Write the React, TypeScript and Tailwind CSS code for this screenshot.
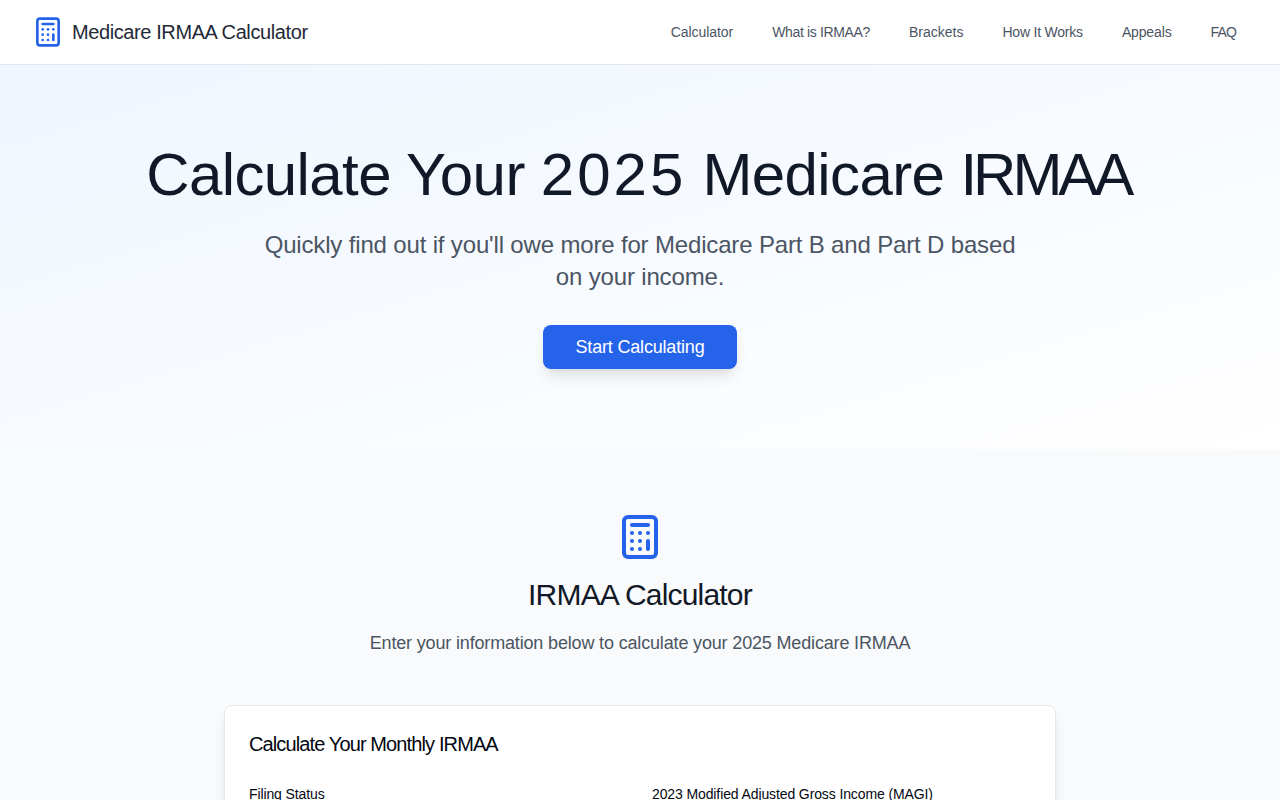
import { Calculator } from "lucide-react";

const links = [
  { label: "Calculator", cls: "tracking-[-0.005em]" },
  { label: "What is IRMAA?", cls: "tracking-[-0.025em]" },
  { label: "Brackets", cls: "tracking-[0em]" },
  { label: "How It Works", cls: "tracking-[-0.015em]" },
  { label: "Appeals", cls: "tracking-[-0.01em]" },
  { label: "FAQ", cls: "tracking-[-0.06em]" },
];

export default function App() {
  return (
    <div className="min-h-screen bg-[#f9fafb] font-['Liberation_Sans',Arial,sans-serif] text-[#111827]">
      <header className="flex h-[65px] items-center justify-between border-b border-[#e5e7eb] bg-white px-8 shadow-sm">
        <div className="flex items-center gap-2">
          <Calculator className="h-8 w-8 text-[#2563eb]" />
          <span className="text-xl tracking-[-0.02em] text-[#1f2937]">Medicare IRMAA Calculator</span>
        </div>
        <nav className="flex items-center gap-[15px]">
          {links.map((l) => (
            <a key={l.label} className={`px-3 text-sm text-[#4b5563] ${l.cls}`}>
              {l.label}
            </a>
          ))}
        </nav>
      </header>

      <section className="bg-gradient-to-br from-[#eff6ff] to-white py-20 text-center">
        <h1 className="mb-6 text-6xl leading-none tracking-[-0.01em] text-[#111827]">
          Calculate Your <span className="tracking-[0.05em]">2025</span> Medicare <span className="tracking-[-0.067em]">IRMA</span>A
        </h1>
        <p className="mx-auto mb-8 max-w-3xl text-2xl tracking-[-0.0067em] text-[#4b5563]">
          Quickly find out if you'll owe more for Medicare Part B and Part D based on your income.
        </p>
        <button className="h-11 rounded-lg bg-[#2563eb] px-8 text-lg tracking-[-0.01em] text-white shadow-lg">Start Calculating</button>
      </section>

      <section className="bg-[#f9fafb] pt-16 pb-16">
        <div className="mx-auto max-w-4xl px-8">
          <div className="mb-12 flex flex-col items-center text-center">
            <Calculator className="mb-4 h-12 w-12 text-[#2563eb]" />
            <h2 className="mb-4 text-3xl tracking-[-0.027em] text-[#111827]">IRMAA Calculator</h2>
            <p className="text-lg tracking-[-0.009em] text-[#4b5563]">Enter your information below to calculate your 2025 Medicare IRMAA</p>
          </div>
          <div className="rounded-lg border border-[#e5e7eb] bg-white p-6 shadow-lg">
            <h3 className="mb-[26px] text-xl tracking-[-0.044em] text-[#030712]">Calculate Your Monthly IRMAA</h3>
            <div className="grid grid-cols-2 gap-6">
              <div>
                <label className="mb-2 block text-sm tracking-[-0.008em] text-[#030712]">Filing Status</label>
                <div className="h-10 rounded-md border border-[#e5e7eb] bg-white" />
              </div>
              <div>
                <label className="mb-2 block text-sm tracking-[-0.008em] text-[#030712]">2023 Modified Adjusted Gross Income (MAGI)</label>
                <div className="h-10 rounded-md border border-[#e5e7eb] bg-white" />
              </div>
            </div>
          </div>
        </div>
      </section>
    </div>
  );
}
